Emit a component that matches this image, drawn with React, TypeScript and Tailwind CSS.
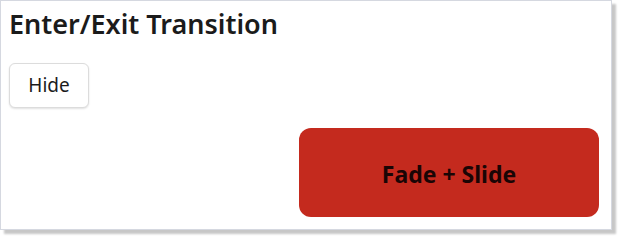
import React from 'react';

export default function App() {
  return (
    <div className="w-[620px] h-[239px] bg-white">
      <div
        className="w-[612px] h-[230px] bg-white border border-[#d5d8e0] shadow-[4px_4px_2px_rgba(0,0,0,0.22)] px-2 pt-[7px] flex flex-col"
        style={{ fontFamily: '"Noto Sans", "Open Sans", sans-serif' }}
      >
        <h2 className="m-0 text-[27px] leading-[32px] font-semibold text-[#1b1b1b]">Enter/Exit Transition</h2>

        <div className="mt-[23px]">
          <button className="w-[80px] h-[45px] bg-white border border-[#dcdcdc] rounded-md shadow-[0_1px_2px_rgba(0,0,0,0.12)] text-[19px] text-[#1b1b1b]">
            Hide
          </button>
        </div>

        <div className="mt-5 flex justify-end pr-[4px]">
          <div className="w-[300px] h-[89px] rounded-xl bg-[#c42a1e] flex items-center justify-center">
            <span className="text-[23px] font-bold text-[#1a0505] pt-[3px]">Fade + Slide</span>
          </div>
        </div>
      </div>
    </div>
  );
}
